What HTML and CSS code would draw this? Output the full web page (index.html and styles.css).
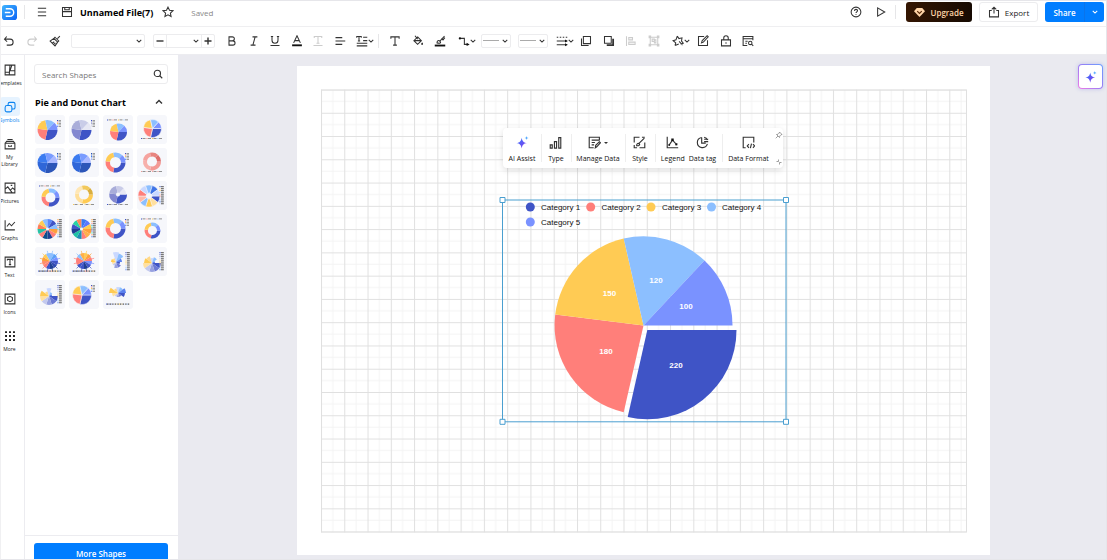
FILE: index.html
```html
<!DOCTYPE html>
<html lang="en">
<head>
<meta charset="utf-8">
<title>Unnamed File(7)</title>
<link rel="stylesheet" href="styles.css">
</head>
<body>
<svg class="sprite" aria-hidden="true">
  <symbol id="chev" viewBox="0 0 8 8"><path d="M1 2.500 4 5.500 7 2.500"/></symbol>
  <symbol id="menu" viewBox="0 0 16 16"><path d="M2.500 3h11M2.500 8h11M2.500 13h11"/></symbol>
  <symbol id="save" viewBox="0 0 16 16"><path d="M2 2h12v12H2zM2 7.500h12M5 2v3h6V2"/></symbol>
  <symbol id="star" viewBox="0 0 16 16"><path d="m8 1.500 2 4.200 4.600.6-3.400 3.200.9 4.600L8 11.800l-4.100 2.300.9-4.600L1.400 6.300 6 5.700z"/></symbol>
  <symbol id="help" viewBox="0 0 16 16"><circle cx="8" cy="8" r="6.500"/><path d="M6 6.500c0-2.600 4-2.600 4-.2C10 7.800 8 7.800 8 9.400M8 11v1"/></symbol>
  <symbol id="play" viewBox="0 0 16 16"><path d="M3.500 2.500 13 8l-9.500 5.500z"/></symbol>
  <symbol id="export" viewBox="0 0 16 16"><path d="M5 6H2v8.500h12V6h-3M8 10V1.500M5 4.500l3-3 3 3"/></symbol>
  <symbol id="undo" viewBox="0 0 16 16"><path d="M5 2 2 5.500 5.500 9M2 5.500h7.500a4 4 0 0 1 0 8H5"/></symbol>
  <symbol id="redo" viewBox="0 0 16 16"><path d="m11 2 3 3.500L10.500 9M14 5.500H6.500a4 4 0 0 0 0 8H11"/></symbol>
  <symbol id="brush" viewBox="0 0 16 16"><path d="m14.500 1.500-3.300 3.300M8 3l5 5-1.500 1.500-5-5zM6.500 4.500 1.500 8l6.500 6.500 3.500-5M4.500 11l2.500-2M6.200 12.800l2.300-2.300"/></symbol>
  <symbol id="bold" viewBox="0 0 16 16"><path d="M4 2.500h4.500a2.600 2.600 0 0 1 0 5.300H4zM4 7.800h5.200a2.800 2.800 0 0 1 0 5.700H4z"/></symbol>
  <symbol id="italic" viewBox="0 0 16 16"><path d="M6 2.500h6.500M3.500 13.500H10M9.500 2.500l-3 11"/></symbol>
  <symbol id="under" viewBox="0 0 16 16"><path d="M4 2v5a4 4 0 0 0 8 0V2M2 14h12M2.500 2h3M10.500 2h3"/></symbol>
  <symbol id="fontcolor" viewBox="0 0 16 16"><path d="M3.500 10.500 8 1l4.500 9.500M5.200 7.500h5.600"/><path class="ink" d="M1.500 12.500h13V15h-13z"/></symbol>
  <symbol id="textbase" viewBox="0 0 16 16"><path d="M3 4V2h10v2M8 2v9M6 11h4M2 14h12"/></symbol>
  <symbol id="align" viewBox="0 0 16 16"><path d="M2 3.500h9M2 8h13M2 12.500h9"/></symbol>
  <symbol id="spacing" viewBox="0 0 16 16"><path d="M1 3.500V2h6v1.500M4 2v6M2.500 8h3M9.500 3h5.500M9.500 7.500h5.500M1 11h14M1 14.500h14"/></symbol>
  <symbol id="text" viewBox="0 0 16 16"><path d="M2.500 5V2.500h11V5M8 2.500v11M5.500 13.500h5"/></symbol>
  <symbol id="fill" viewBox="0 0 16 16"><path d="m7.500 2.500 5 5-5 5-5-5zM4 1l3.500 4.500M3 7.500h9.500"/><path class="ink" d="M13.500 9.500c2 2.500 1.200 3.500 0 3.500s-2-1 0-3.500z"/></symbol>
  <symbol id="pen" viewBox="0 0 16 16"><path d="m14 1.500-6.500 7M4 10.500c0-3 2-4 4-2s0 3-4 2zM10 4.500l2 2 2.500-3"/><path class="ink" d="M1 12.800h14v2.500H1z"/></symbol>
  <symbol id="connector" viewBox="0 0 16 16"><path d="M2 4.500h6.500v8H12"/><circle class="ink" cx="2.500" cy="4.500" r="1.500"/><path class="ink" d="m11.500 10.300 4 2.200-4 2.200z"/></symbol>
  <symbol id="lines" viewBox="0 0 16 16"><path d="M1 3h2M5 3h2M9 3h2M13 3h2M1 8h14M1 13h14"/><path class="ink" d="m12 6 3.500 2-3.500 2zM12 11l3.500 2-3.500 2z"/></symbol>
  <symbol id="front" viewBox="0 0 16 16"><path d="M4.500 2h9.500v9.500H4.500zM2 4.500V14h9.500"/></symbol>
  <symbol id="copy" viewBox="0 0 16 16"><path d="M2 2h9v9H2z"/><path class="heavy" d="M13.500 5v8.500H5"/></symbol>
  <symbol id="alignobj" viewBox="0 0 16 16"><path d="M2 1.500v13M5 3.500h5v3H5zM5 9.500h8.500v3H5z"/></symbol>
  <symbol id="group" viewBox="0 0 16 16"><path d="M3 3h10v10H3zM1.500 1.500h2v2h-2zM12.500 1.500h2v2h-2zM1.500 12.500h2v2h-2zM12.500 12.500h2v2h-2zM5.500 5.500h3v3h-3zM8.500 8.500v2h2v-4h-2"/></symbol>
  <symbol id="shape" viewBox="0 0 16 16"><path d="m7 1.500 2.300 3.300 4-1-.6 4.200 2.300 3-3.500 1M4 14l1-3.500-3.500-2.800 3.800-1.200L7 1.500M4 14l5-2M9.500 8.500l4.500 5"/></symbol>
  <symbol id="edit" viewBox="0 0 16 16"><path d="M9.500 2H2v12h12V7M6 10.500l1-3L13.500 1l1.500 1.500L8.500 9.500z"/></symbol>
  <symbol id="lock" viewBox="0 0 16 16"><path d="M2 6.500h12v8H2zM5 6.500V4a3 3 0 0 1 6 0v2.500M8 9.500v2"/></symbol>
  <symbol id="find" viewBox="0 0 16 16"><path d="M14.500 7V2h-13v12H7M1.500 5h13M4.500 8.200h3M4.500 11h2"/><circle cx="11" cy="10.500" r="2.300"/><path d="m12.700 12.200 2.300 2.300"/></symbol>
  <symbol id="search" viewBox="0 0 16 16"><circle cx="7" cy="7" r="5"/><path d="m10.800 10.800 4 4"/></symbol>
  <symbol id="templates" viewBox="0 0 16 16"><path d="M1.500 1.500h13v13h-13zM8 1.500 7 14.500M7.500 9h7M10.500 1.500 8 9M1.500 11h5.500"/></symbol>
  <symbol id="symbols" viewBox="0 0 16 16"><rect x="1.500" y="6" width="9" height="8.500" rx="2.500"/><path d="M5.500 6V4a2.200 2.200 0 0 1 2.200-2.200h4.800a2.200 2.200 0 0 1 2.200 2.200v4.500a2.200 2.200 0 0 1-2.200 2.200h-2"/></symbol>
  <symbol id="library" viewBox="0 0 16 16"><path d="m1.500 7 2-2.500h9l2 2.500M1.500 7h13v7.500h-13zM4.500 2h7M6 9.500v1.500h4V9.500"/></symbol>
  <symbol id="pictures" viewBox="0 0 16 16"><path d="M1.500 1.500h13v13h-13zM1.500 9.500 5 6.500l6 8M8.500 11l3-3 3 2.500M9 4.500h2"/></symbol>
  <symbol id="graphs" viewBox="0 0 16 16"><path d="M1.500 1.500v13h13M4 10l3-4 3 3 4.500-5"/></symbol>
  <symbol id="textbox" viewBox="0 0 16 16"><path d="M1.500 1.500h13v13h-13zM4.500 6V4.500h7V6M8 4.500v7M6.500 11.500h3"/></symbol>
  <symbol id="icons" viewBox="0 0 16 16"><path d="M1.500 1.500h13v13h-13zM8 4.500l3.200 1.500v4L8 11.500 4.800 10V6z"/></symbol>
  <symbol id="more" viewBox="0 0 16 16"><path class="ink" d="M1.500 1.500h2.400v2.400H1.500zM6.800 1.500h2.400v2.400H6.800zM12.100 1.500h2.400v2.400h-2.400zM1.500 6.800h2.400v2.400H1.500zM6.800 6.800h2.400v2.400H6.800zM12.100 6.800h2.400v2.400h-2.400zM1.500 12.100h2.400v2.400H1.500zM6.800 12.100h2.400v2.400H6.800zM12.100 12.100h2.400v2.400h-2.400z"/></symbol>
  <symbol id="bars" viewBox="0 0 16 16"><path d="M1.500 11h2.500v4H1.500zM6.700 7h2.600v8H6.700zM12 2h2.500v13H12z"/></symbol>
  <symbol id="manage" viewBox="0 0 16 16"><path d="M14 5.500v-4H1.500v13H7M4.500 5H14M4.500 8h4M4.500 11h3M9 14.500l.5-3 4.500-4.500 1.300 1.300-4.500 5z"/></symbol>
  <symbol id="styleic" viewBox="0 0 16 16"><path d="M8 1.500H1.500V8M8 14.500h6.500V8M1.500 11v3.500H5M11 1.500h3.500M14 2.500l-7 7M4.500 12c0-2.500 1.500-3.500 3-2.500s.5 2.500-3 2.500z"/></symbol>
  <symbol id="legend" viewBox="0 0 16 16"><path d="M1.500 1v13.500H15M3.500 11.500 8 5l4 4.500M12.500 10v1.500"/><path class="ink" d="M6.500 3h3v3h-3zM3 10h2v2H3zM11.500 9h2.500v2.500h-2.500z"/></symbol>
  <symbol id="datatag" viewBox="0 0 16 16"><path d="M7 1.800a6.300 6.300 0 1 0 7 8M7 1.800v7h5M10 1.500a5 5 0 0 1 4 3.500M10 4h5M10 7h5"/></symbol>
  <symbol id="format" viewBox="0 0 16 16"><path d="M4.500 14.500h-3v-13h13V8M8.500 10l-2 2.200 2 2.300M13.500 10l2 2.200-2 2.300M11.700 9.500l-1.400 5.500"/></symbol>
  <symbol id="spark" viewBox="0 0 16 16"><path d="M7 2c.8 4.400 2.200 5.900 6.500 6.700C9.200 9.500 7.800 11 7 15.500 6.200 11 4.800 9.500.5 8.700 4.800 7.900 6.200 6.400 7 2z"/><path class="tiny" d="M13 0c.3 1.700.8 2.200 2.500 2.500C13.800 2.800 13.300 3.300 13 5c-.3-1.700-.8-2.200-2.500-2.500C12.200 2.200 12.700 1.700 13 0z"/></symbol>
  <symbol id="pin" viewBox="0 0 16 16"><path d="m9 2 5 5-2 .5-2.500 2.500-.5 3-6-6 3-.5L8.500 4zM6 10l-4.500 4.500"/></symbol>
  <symbol id="shrink" viewBox="0 0 16 16"><path d="M3 7h4V3M9 13V9h4"/></symbol>
</svg>

<div class="app">
  <header class="topbar">
    <svg class="logo" viewBox="0 0 16 16" role="img" aria-label="Edraw">
      <defs><linearGradient id="lg" x1="0" y1="0" x2="1" y2="1"><stop offset="0" stop-color="#3fb4ff"/><stop offset="1" stop-color="#0a63f5"/></linearGradient></defs>
      <rect width="16" height="16" rx="3" fill="url(#lg)"/>
      <path d="M4 4h4.500a4 4 0 0 1 0 8H4M3 8h6" fill="none" stroke="#fff" stroke-width="1.500"/>
    </svg>
    <span class="rule logo-rule"></span>
    <button class="ib" aria-label="Menu"><svg class="ic"><use href="#menu"/></svg></button>
    <button class="ib" aria-label="Save"><svg class="ic"><use href="#save"/></svg></button>
    <h1 class="title">Unnamed File(7)</h1>
    <button class="ib" aria-label="Favorite"><svg class="ic"><use href="#star"/></svg></button>
    <span class="saved">Saved</span>
    <div class="actions">
      <button class="ib" aria-label="Help"><svg class="ic"><use href="#help"/></svg></button>
      <button class="ib" aria-label="Play"><svg class="ic"><use href="#play"/></svg></button>
      <span class="rule"></span>
      <button class="btn upgrade"><svg class="gem" viewBox="0 0 12 12"><path d="M3 1h6l3 3.500L6 11 0 4.500z" fill="#ffd5a8"/><path d="M3.500 4.500 6 7l2.500-2.500" fill="none" stroke="#5a2a08" stroke-width="1.300"/></svg>Upgrade</button>
      <button class="btn export"><svg class="ic"><use href="#export"/></svg>Export</button>
      <div class="split">
        <button class="share">Share</button>
        <button class="share-more" aria-label="Share options"><svg class="chev"><use href="#chev"/></svg></button>
      </div>
    </div>
  </header>

  <div class="toolbar" role="toolbar" aria-label="Formatting">
    <div class="set set-history">
      <button class="tb" aria-label="Undo"><svg class="ic"><use href="#undo"/></svg></button>
      <button class="tb" aria-label="Redo" disabled><svg class="ic"><use href="#redo"/></svg></button>
      <button class="tb" aria-label="Format painter"><svg class="ic"><use href="#brush"/></svg></button>
    </div>
    <div class="pick pick-font"><select aria-label="Font"><option></option></select><svg class="chev"><use href="#chev"/></svg></div>
    <div class="stepper">
      <button aria-label="Decrease size"><svg class="sign" viewBox="0 0 8 8"><path d="M.5 4h7"/></svg></button>
      <div class="pick"><select aria-label="Font size"><option></option></select><svg class="chev"><use href="#chev"/></svg></div>
      <button aria-label="Increase size"><svg class="sign" viewBox="0 0 8 8"><path d="M.5 4h7M4 .5v7"/></svg></button>
    </div>
    <div class="set set-text">
      <button class="tb" aria-label="Bold"><svg class="ic"><use href="#bold"/></svg></button>
      <button class="tb" aria-label="Italic"><svg class="ic"><use href="#italic"/></svg></button>
      <button class="tb" aria-label="Underline"><svg class="ic"><use href="#under"/></svg></button>
      <button class="tb" aria-label="Font color"><svg class="ic"><use href="#fontcolor"/></svg></button>
      <button class="tb" aria-label="Text baseline" disabled><svg class="ic"><use href="#textbase"/></svg></button>
      <button class="tb" aria-label="Align"><svg class="ic"><use href="#align"/></svg></button>
    </div>
    <button class="tb drop" aria-label="Line spacing"><svg class="ic"><use href="#spacing"/></svg><svg class="chev"><use href="#chev"/></svg></button>
    <span class="rule"></span>
    <div class="set set-draw">
      <button class="tb" aria-label="Text"><svg class="ic"><use href="#text"/></svg></button>
      <button class="tb" aria-label="Fill"><svg class="ic"><use href="#fill"/></svg></button>
      <button class="tb" aria-label="Line color"><svg class="ic"><use href="#pen"/></svg></button>
    </div>
    <button class="tb drop" aria-label="Connector"><svg class="ic"><use href="#connector"/></svg><svg class="chev"><use href="#chev"/></svg></button>
    <div class="pick pick-line"><select aria-label="Line weight"><option></option></select><span class="sample"></span><svg class="chev"><use href="#chev"/></svg></div>
    <div class="pick pick-line"><select aria-label="Line style"><option></option></select><span class="sample"></span><svg class="chev"><use href="#chev"/></svg></div>
    <button class="tb drop" aria-label="Line ends"><svg class="ic"><use href="#lines"/></svg><svg class="chev"><use href="#chev"/></svg></button>
    <div class="set set-arrange">
      <button class="tb" aria-label="Bring to front"><svg class="ic"><use href="#front"/></svg></button>
      <button class="tb" aria-label="Send to back"><svg class="ic"><use href="#copy"/></svg></button>
      <button class="tb" aria-label="Align objects" disabled><svg class="ic"><use href="#alignobj"/></svg></button>
      <button class="tb" aria-label="Group" disabled><svg class="ic"><use href="#group"/></svg></button>
    </div>
    <button class="tb drop" aria-label="Shape effects"><svg class="ic"><use href="#shape"/></svg><svg class="chev"><use href="#chev"/></svg></button>
    <div class="set set-end">
      <button class="tb" aria-label="Edit"><svg class="ic"><use href="#edit"/></svg></button>
      <button class="tb" aria-label="Lock"><svg class="ic"><use href="#lock"/></svg></button>
      <button class="tb" aria-label="Find"><svg class="ic"><use href="#find"/></svg></button>
    </div>
  </div>

  <div class="body">
    <nav class="rail" aria-label="Libraries">
      <button class="ri"><span class="tile"><svg class="ic"><use href="#templates"/></svg></span>Templates</button>
      <button class="ri on"><span class="tile"><svg class="ic"><use href="#symbols"/></svg></span>Symbols</button>
      <button class="ri"><span class="tile"><svg class="ic"><use href="#library"/></svg></span>My<br>Library</button>
      <button class="ri"><span class="tile"><svg class="ic"><use href="#pictures"/></svg></span>Pictures</button>
      <button class="ri"><span class="tile"><svg class="ic"><use href="#graphs"/></svg></span>Graphs</button>
      <button class="ri"><span class="tile"><svg class="ic"><use href="#textbox"/></svg></span>Text</button>
      <button class="ri"><span class="tile"><svg class="ic"><use href="#icons"/></svg></span>Icons</button>
      <button class="ri"><span class="tile"><svg class="ic"><use href="#more"/></svg></span>More</button>
    </nav>

    <aside class="panel">
      <div class="panel-main">
        <div class="search"><input type="text" placeholder="Search Shapes" aria-label="Search Shapes"><svg class="ic"><use href="#search"/></svg></div>
        <button class="section">Pie and Donut Chart<svg class="chev up"><use href="#chev"/></svg></button>
        <div class="thumbs" id="thumbs"></div>
      </div>
      <div class="panel-foot"><button class="more-shapes">More Shapes</button></div>
    </aside>

    <main class="work">
      <div class="sheet">
        <svg class="drawing" viewBox="0 0 693 489" role="img" aria-label="Pie chart of five categories">
          <defs>
            <pattern id="grid" x="24" y="23.500" width="23.270" height="23.270" patternUnits="userSpaceOnUse">
              <path d="M11.800 0v23.300M0 11.800h23.300" stroke="#f4f4f4" fill="none"/>
              <path d="M.5 0v23.300M0 .5h23.300" stroke="#e0e0e0" fill="none"/>
            </pattern>
          </defs>
          <rect x="24" y="23.500" width="645.500" height="443" fill="url(#grid)"/>
          <rect x="24.500" y="24" width="645" height="442" fill="none" stroke="#e0e0e0"/>
          <g stroke="none">
            <path fill="#ff7f7a" d="M346.500 259.400 326.700 346.200A89 89 0 0 1 258.200 248.600z"/>
            <path fill="#ffcb54" d="M346.500 259.400 258.200 248.600A89 89 0 0 1 326.700 172.600z"/>
            <path fill="#8cbfff" d="M346.500 259.400 326.700 172.600A89 89 0 0 1 407.500 194.600z"/>
            <path fill="#7a92ff" d="M346.500 259.400 407.500 194.600A89 89 0 0 1 435.500 259.400z"/>
            <path fill="#3f54c6" d="M350.300 264H439.500A89 89 0 0 1 330.700 351z"/>
          </g>
          <g class="values">
            <text x="312.500" y="230">150</text><text x="359" y="217">120</text><text x="389" y="243">100</text><text x="309" y="288">180</text><text x="379" y="302">220</text>
          </g>
          <g>
            <circle cx="233.300" cy="141" r="4.500" fill="#3f54c6"/><circle cx="293.700" cy="141" r="4.500" fill="#ff7f7a"/><circle cx="354" cy="141" r="4.500" fill="#ffcb54"/><circle cx="414.500" cy="141" r="4.500" fill="#8cbfff"/><circle cx="233.300" cy="156" r="4.500" fill="#7a92ff"/>
          </g>
          <g class="keys">
            <text x="244" y="144">Category 1</text><text x="304.500" y="144">Category 2</text><text x="365" y="144">Category 3</text><text x="425" y="144">Category 4</text><text x="244" y="159">Category 5</text>
          </g>
          <g class="selection">
            <rect x="205.500" y="134" width="283.500" height="221.800" fill="none"/>
            <path d="M203 131.500h5v5h-5zM486.500 131.500h5v5h-5zM203 353.300h5v5h-5zM486.500 353.300h5v5h-5z" fill="#fff"/>
          </g>
        </svg>
        <div class="float" role="toolbar" aria-label="Chart">
          <div class="fg fg-ai"><button class="fb ai"><svg class="ic"><use href="#spark"/></svg>AI Assist</button></div>
          <div class="fg fg-s"><button class="fb"><svg class="ic"><use href="#bars"/></svg>Type</button></div>
          <div class="fg fg-m"><button class="fb"><span class="pair"><svg class="ic"><use href="#manage"/></svg><svg class="caret" viewBox="0 0 4 4"><path d="M0 1h4L2 3z"/></svg></span>Manage Data</button></div>
          <div class="fg fg-s"><button class="fb"><svg class="ic"><use href="#styleic"/></svg>Style</button></div>
          <div class="fg fg-l"><button class="fb"><svg class="ic"><use href="#legend"/></svg>Legend</button><button class="fb"><svg class="ic"><use href="#datatag"/></svg>Data tag</button></div>
          <div class="fg fg-f"><button class="fb"><svg class="ic"><use href="#format"/></svg>Data Format</button></div>
          <div class="tail"><button aria-label="Pin"><svg class="mini"><use href="#pin"/></svg></button><button aria-label="Collapse"><svg class="mini"><use href="#shrink"/></svg></button></div>
        </div>
      </div>
      <button class="assistant" aria-label="AI assistant"><svg class="ic"><use href="#spark"/></svg></button>
    </main>
  </div>
</div>
<svg class="sprite" aria-hidden="true"><defs>
  <linearGradient id="sparkfill" x1="0" y1="0" x2="1" y2="1"><stop offset="0" stop-color="#2f7bff"/><stop offset="1" stop-color="#8a35e8"/></linearGradient>
</defs></svg>
<script src="thumbs.js"></script>
</body>
</html>
```

FILE: styles.css
```css
* { box-sizing: border-box; }
body { margin: 0; font-family: "Open Sans", "Noto Sans", sans-serif; color: #222; font-size: 8px; }
button { font: inherit; color: inherit; background: none; border: 0; padding: 0; margin: 0; }
button, .pick, .tile { display: flex; align-items: center; justify-content: center; }
svg { display: block; flex: none; }
.sprite { position: absolute; width: 0; height: 0; }
.ic { width: 12px; height: 12px; }
.ic, .chev, .sign, .mini { fill: none; stroke: #333; stroke-width: 1.4; }
.chev { width: 6px; height: 6px; }
.sign { width: 8px; height: 8px; }
.ink { fill: #111; stroke: none; }
.heavy { stroke-width: 2.4; }
.rule { width: 1px; height: 14px; background: #e6e6e8; }

.app { height: 100vh; display: flex; flex-direction: column; overflow: hidden; background: #fff; border: 1px solid #e6e6ea; border-left-color: #f0f0f2; }
.topbar { height: 26px; flex: none; display: flex; align-items: center; padding: 0 2px 3px 1px; border-bottom: 1px solid #efeff1; }
.logo { width: 15px; height: 15px; }
.logo-rule { margin: 0 4px 0 7px; }
.ib { width: 25px; height: 20px; }
.title { margin: 0 2px 0 1px; font-size: 9px; font-weight: 700; color: #000; white-space: nowrap; }
.saved { margin-left: 11px; color: #888; }
.actions { margin-left: auto; display: flex; align-items: center; }
.actions .rule { margin: 0 10px 0 2px; }
.btn { height: 20px; border-radius: 3px; gap: 5px; }
.upgrade { width: 66px; background: linear-gradient(90deg, #341602, #160a02); color: #ffd5a8; font-weight: 600; margin-right: 7px; }
.gem { width: 11px; height: 11px; }
.export { width: 59px; border: 1px solid #ececee; margin-right: 7px; }
.split { display: flex; height: 20px; border-radius: 3px; overflow: hidden; background: #007dff; color: #fff; }
.share { width: 39px; font-weight: 600; }
.share-more { width: 20px; border-left: 1px solid #0a74ea; }
.share-more .chev { stroke: #fff; }

.toolbar { height: 28px; flex: none; display: flex; align-items: center; border-bottom: 1px solid #ececf0; }
.set { display: flex; justify-content: space-between; }
.tb { width: 16px; height: 18px; }
.tb:disabled .ic { stroke: #ccc; }
.drop { width: 22px; }
.set-history { width: 62px; margin-right: 8px; }
.pick { position: relative; height: 14px; border: 1px solid #ececee; border-radius: 2px; justify-content: flex-end; padding-right: 2px; }
.pick select { position: absolute; inset: 0; width: 100%; appearance: none; background: none; border: 0; padding: 0; font: inherit; }
.pick-font { width: 74px; margin-right: 8px; }
.stepper { display: flex; width: 62px; height: 14px; border: 1px solid #ececee; border-radius: 2px; margin-right: 9px; }
.stepper button { width: 12px; }
.stepper .pick { flex: 1; height: 12px; border-width: 0 1px; border-radius: 0; }
.set-text { width: 124px; margin-right: 6px; }
.toolbar > .rule { margin: 0 8px 0 2px; }
.set-draw { width: 61px; margin-right: 8px; }
.pick-line { width: 30px; margin: 0 4px 0 3px; gap: 3px; }
.pick-line + .drop { margin: 0 2px 0 2px; }
.sample { width: 16px; height: 1px; background: #aaa; }
.set-arrange { width: 84px; margin-right: 8px; }
.set-end { width: 61px; margin-left: 3px; }

.body { flex: 1; min-height: 0; display: flex; }
.rail { width: 24px; flex: none; overflow: hidden; border-right: 1px solid #ececf0; padding-top: 5px; display: flex; flex-direction: column; gap: 3px; }
.ri { width: 17px; flex-direction: column; font-size: 5px; line-height: 7px; gap: 1px; padding-bottom: 7px; text-align: center; white-space: nowrap; }
.tile { width: 20px; height: 19px; border-radius: 3px; }
.on { color: #0a83f0; }
.on .tile { background: #e6f3ff; }
.on .ic { stroke: #0a83f0; }

.panel { width: 153px; flex: none; display: flex; flex-direction: column; }
.panel-main { flex: 1; padding: 9px 10px 0 9px; }
.search { display: flex; align-items: center; height: 20px; border: 1px solid #ececee; border-radius: 3px; padding: 0 4px 0 7px; }
.search input { flex: 1; min-width: 0; border: 0; outline: 0; padding: 0; font: inherit; }
.search input::placeholder { color: #777; opacity: 1; }
.search .ic { width: 10px; height: 10px; stroke-width: 1.8; }
.section { width: 100%; height: 31px; padding: 5px 5px 0 1px; justify-content: space-between; font-size: 9px; font-weight: 700; color: #000; }
.section .chev { width: 8px; height: 8px; }
.up { transform: rotate(180deg); }
.thumbs { display: grid; grid-template-columns: repeat(4, 1fr); gap: 4px; padding: 0 1px; }
.thumb { width: 100%; height: 29px; background: #f6f7fb; border-radius: 3px; }
.panel-foot { height: 24px; flex: none; border-top: 1px solid #ececf0; padding: 7px 10px 0 9px; overflow: hidden; }
.more-shapes { width: 100%; height: 20px; border-radius: 3px; background: #007dff; color: #fff; font-weight: 600; }

.work { flex: 1; min-width: 0; position: relative; background: #eaeaf0; padding: 11px 0 0 2px; overflow: hidden; }
.sheet { position: relative; width: 693px; margin: 0 auto; background: #fff; }
.drawing { width: 100%; }
.keys { font: 8px "Liberation Sans", Arial, sans-serif; fill: #111; }
.values { font: bold 8px "Liberation Sans", Arial, sans-serif; fill: #fff; text-anchor: middle; }
.selection { stroke: #4a9fd0; }
.float { position: absolute; left: 206px; top: 62px; display: flex; height: 40px; padding-left: 1px; background: #fff; border-radius: 4px; box-shadow: 0 2px 6px #0002; font-size: 7px; color: #111; }
.fg { display: flex; justify-content: center; margin: 6px 0; height: 28px; border-right: 1px solid #eee; }
.fb { flex-direction: column; justify-content: space-between; line-height: 8px; white-space: nowrap; padding: 2px 0 0; height: 29px; }
.float .ic { width: 13px; height: 13px; }
.fg-ai { width: 38px; }
.fg-s { width: 30px; }
.fg-m { width: 54px; }
.fg-l { width: 67px; gap: 4px; }
.fg-f { width: 52px; border: 0; }
.pair { display: flex; align-items: center; gap: 3px; }
.caret { width: 4px; height: 4px; fill: #333; }
.ai .ic, .assistant .ic { fill: url(#sparkfill); stroke: none; }
.tiny { fill: #55aaff; }
.tail { display: flex; flex-direction: column; justify-content: space-between; width: 8px; padding: 3px 0 2px; }
.mini { width: 8px; height: 8px; stroke: #777; }
.assistant { position: absolute; right: 3px; top: 9px; width: 25px; height: 25px; border: 1px solid transparent; border-radius: 4px; background: linear-gradient(#fff, #fff) padding-box, linear-gradient(45deg, #f07ce8, #9a7cf5, #6aa0ff) border-box; box-shadow: 0 0 4px #7a80e066; }
```

FILE: thumbs.js
```javascript
const MULTI = ["#3f54c6", "#ff7f7a", "#ffcb54", "#8cbfff", "#7a92ff"];
const LILAC = ["#3f54c6", "#8388d0", "#a9add9", "#c9cce8", "#e6e7f4"];
const BLUE = ["#2c56b8", "#2f66d8", "#3b7bf0", "#7a9cff", "#a9b8ff"];
const RED = ["#f39a95", "#f7b0ab", "#f5a39f", "#e88580", "#dd6f6c"];
const GOLD = ["#ffcb54", "#ffdf9a", "#ffe7b5", "#f2c95c", "#d9ae3e"];
const SPECTRUM = ["#ff9f3a", "#ff7f7a", "#1f3f93", "#0d4f8c", "#ff7f7a", "#27c3a5", "#ff7f5a", "#ffcb54", "#8cbfff", "#5a88f8", "#3f54c6", "#8cbfff"];
const WHEEL = ["#ff9f3a", "#ffb04a", "#ff7f7a", "#1f8fb3", "#1fc3a5", "#1f3f93", "#3f54c6", "#27d3a5", "#ff8a5a", "#3b7bf0", "#5a78ff", "#ffcb54"];
const SUN = ["#3f54c6", "#2f49b0", "#1f3f93", "#3f54c6", "#ff7f7a", "#ff8f6a", "#ff9f3a", "#ffcb54", "#8cbfff", "#8cbfff", "#5aa0f8", "#7a92ff"];
const SUN_WARM = ["#7a92ff", "#3f54c6", "#1f3f93", "#3f54c6", "#3f54c6", "#ff7f7a", "#ff7f7a", "#8cbfff", "#ffb04a", "#ffcb54", "#ff9f3a", "#ff7f7a"];
const PETALS = ["#3f54c6", "#ffe0a0", "#ffcb54", "#8cbfff", "#ffb9a8", "#ff7f7a", "#c9d8ff", "#8cbfff", "#3f74e6", "#c9d8ff"];
const FAN = ["#3f54c6", "#6a78d4", "#97a1e0", "#c3c9ee", "#ffe0a0", "#ffcb54", "#ffd98a", "#c9d8ff", "#8cbfff", "#5a80ee"];

const EVEN5 = [220, 180, 150, 120, 100];
const EVEN12 = Array(12).fill(1);
const EVEN10 = Array(10).fill(1);

const items = [
  { c: MULTI, x: 12.5, y: 15, r: 10, key: "r" },
  { c: LILAC, x: 12.5, y: 15, r: 10, key: "r" },
  { c: MULTI, x: 15.5, y: 17, r: 8.5, key: "t" },
  { c: MULTI, x: 15.5, y: 13.5, r: 9, key: "b", gap: 0.6 },
  { c: BLUE, x: 12.5, y: 15, r: 10, key: "r" },
  { c: BLUE, x: 12.5, y: 15, r: 9.5, key: "r" },
  { c: MULTI, x: 12.5, y: 14.5, r: 10, hole: 5.5, key: "r" },
  { c: RED, x: 15, y: 13.5, r: 9, hole: 5, key: "b" },
  { c: MULTI, x: 15.5, y: 16.5, r: 9, hole: 5, key: "t" },
  { c: GOLD, x: 15, y: 13.5, r: 9, hole: 5, key: "b" },
  { c: LILAC, x: 15, y: 13.5, r: 9, hole: 2, key: "b", rose: 0.1 },
  { c: PETALS, x: 12, y: 15, r: 11, hole: 3, key: "R", w: EVEN10, gap: 0.5 },
  { c: SPECTRUM, x: 12.5, y: 15, r: 10, hole: 1.5, key: "R", w: EVEN12 },
  { c: WHEEL, x: 12.5, y: 15, r: 10, hole: 1.5, key: "R", w: EVEN12 },
  { c: MULTI, x: 12.5, y: 14.5, r: 10, hole: 5.5, key: "r" },
  { c: MULTI, x: 15.5, y: 16.5, r: 8, hole: 4.5, key: "t" },
  { c: SUN, x: 15, y: 14, r: 8, key: "B", w: EVEN12, rays: true },
  { c: SUN_WARM, x: 15, y: 14, r: 8, key: "B", w: EVEN12, rays: true },
  { c: FAN, x: 13, y: 15, key: "R", w: EVEN10, radii: [4, 6, 6, 4, 4, 5, 4, 10, 9, 6] },
  { c: FAN, x: 15, y: 16, key: "R", w: EVEN10, radii: [9, 9, 9, 9, 9, 8, 7, 5, 6, 3] },
  { c: FAN, x: 14, y: 16, key: "R", w: EVEN10, radii: [9, 9, 9, 9, 9, 9, 5, 8, 4, 3] },
  { c: MULTI, x: 13, y: 15, r: 9.5, key: "r", gap: 0.5 },
  { c: FAN, x: 15, y: 13, key: "B", w: EVEN10, radii: [7, 4, 4, 4, 6, 9, 5, 6, 6, 8] }
];

function slice(x, y, r, hole, a, b) {
  const at = (radius, angle) => `${(x + radius * Math.cos(angle)).toFixed(2)} ${(y + radius * Math.sin(angle)).toFixed(2)}`;
  const inner = hole ? `L${at(hole, b)}A${hole} ${hole} 0 0 0 ${at(hole, a)}` : `L${at(0, 0)}`;
  return `M${at(r, a)}A${r} ${r} 0 0 1 ${at(r, b)}${inner}z`;
}

function legend(kind, colors) {
  let out = "";
  const bar = (x, y, w, h, f) => { out += `<rect x="${x}" y="${y}" width="${w}" height="${h}" fill="${f}"/>`; };
  if (kind === "r") colors.forEach((c, i) => { bar(22, 5 + i * 1.5, 1, 1, c); bar(23.5, 5 + i * 1.5, 2.5, 0.8, "#888"); });
  if (kind === "R") for (let i = 0; i < 10; i++) { bar(22.5, 5 + i * 1.9, 1, 1.2, colors[i]); bar(24, 5 + i * 1.9, 2.8, 1.2, "#777"); }
  if (kind === "t") for (let i = 0; i < 4; i++) { bar(4 + i * 5.5, 4.5, 1, 1, colors[i]); bar(5.5 + i * 5.5, 4.5, 3, 0.8, "#777"); }
  if (kind === "b") for (let i = 0; i < 4; i++) { bar(4 + i * 5.5, 23, 1, 1, colors[i]); bar(5.5 + i * 5.5, 23, 3, 0.8, "#777"); }
  if (kind === "B") for (let i = 0; i < 9; i++) { bar(3 + i * 2.6, 23.5, 0.8, 1.2, colors[i]); bar(4 + i * 2.6, 23.5, 1.4, 1.2, "#555"); }
  return out;
}

document.getElementById("thumbs").innerHTML = items.map((t) => {
  const weights = t.w || EVEN5;
  const total = weights.reduce((s, v) => s + v, 0);
  let angle = 0;
  let shapes = "";
  weights.forEach((v, i) => {
    const end = angle + (v / total) * Math.PI * 2;
    const r = t.radii ? t.radii[i] : t.r * (1 - (t.rose || 0) * (i / weights.length));
    const stroke = t.gap ? ` stroke="#f6f7fb" stroke-width="${t.gap}"` : "";
    shapes += `<path d="${slice(t.x, t.y, r, t.hole || 0, angle, end)}" fill="${t.c[i]}"${stroke}/>`;
    if (t.rays) {
      const m = (angle + end) / 2;
      shapes += `<path d="M${t.x + 7 * Math.cos(m)} ${t.y + 7 * Math.sin(m)}L${t.x + 10.5 * Math.cos(m)} ${t.y + 10.5 * Math.sin(m)}" stroke="${t.c[i]}" stroke-width=".7"/>`;
    }
    angle = end;
  });
  return `<svg class="thumb" viewBox="0 0 30 29">${shapes}${legend(t.key, t.c)}</svg>`;
}).join("");
```
